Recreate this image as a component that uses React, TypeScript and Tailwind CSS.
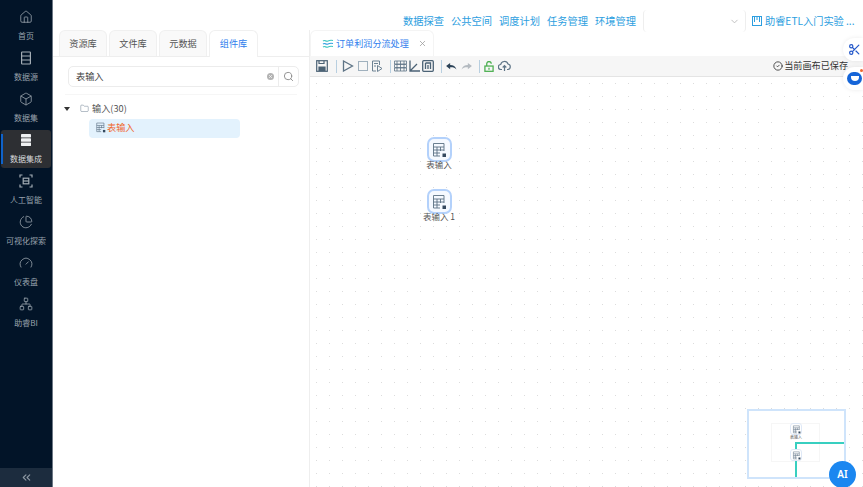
import type { ReactNode } from 'react'
import { ChevronDown, ChevronsLeft, CircleCheck, Folder, Home, Scissors, Search, X, Box, PieChart, Gauge, Network } from 'lucide-react'

function SourceIcon() {
  return (
    <svg width="14" height="14" viewBox="0 0 14 14" fill="none" stroke="#a4adb5" strokeWidth="1.200">
      <rect x="2.600" y="1" width="8.800" height="12" rx="0.500" />
      <path d="M2.600 5h8.800M2.600 9h8.800" />
    </svg>
  )
}

function StackIcon() {
  return (
    <svg width="14" height="14" viewBox="0 0 14 14" fill="#eef0f2">
      <rect x="2" y="1" width="10" height="3.400" rx="0.400" />
      <rect x="2" y="5.300" width="10" height="3.400" rx="0.400" />
      <rect x="2" y="9.600" width="10" height="3.400" rx="0.400" />
    </svg>
  )
}

function ScanIcon() {
  return (
    <svg width="14" height="14" viewBox="0 0 14 14" fill="none" stroke="#a4adb5" strokeWidth="1.200">
      <path d="M1 3.500V1h2.500M10.500 1H13v2.500M13 10.500V13h-2.500M3.500 13H1v-2.500" />
      <rect x="4.200" y="4.200" width="5.600" height="5.600" />
      <path d="M4.200 7h5.600" />
    </svg>
  )
}

const navItems = [
  { label: '首页', icon: <Home size={14} strokeWidth={1.300} color="#a4adb5" /> },
  { label: '数据源', icon: <SourceIcon /> },
  { label: '数据集', icon: <Box size={14} strokeWidth={1.300} color="#a4adb5" /> },
  { label: '数据集成', icon: <StackIcon />, active: true },
  { label: '人工智能', icon: <ScanIcon /> },
  { label: '可视化探索', icon: <PieChart size={14} strokeWidth={1.300} color="#a4adb5" /> },
  { label: '仪表盘', icon: <Gauge size={14} strokeWidth={1.300} color="#a4adb5" /> },
  { label: '助睿BI', icon: <Network size={14} strokeWidth={1.300} color="#a4adb5" /> },
]

const topLinks = ['数据探查', '公共空间', '调度计划', '任务管理', '环境管理']

function TableIcon({ size = 16, color = '#5b7083' }: { size?: number; color?: string }) {
  return (
    <svg width={size} height={size} viewBox="0 0 16 16" fill="none" stroke={color} strokeWidth="0.900">
      <path d="M9 14H2.500V1.500h10.500V9" />
      <path d="M2.500 5h10.500M2.500 8h10.500M2.500 11h6.500M6 5v9M9.500 5v4" />
      <path d="M11.500 11.500l3.500 0-0 3.500-3.500 0z" fill="#34495e" stroke="none" />
    </svg>
  )
}

function CanvasNode({ label, top }: { label: string; top: string }) {
  return (
    <div className={`absolute left-[100px] w-[58px] flex flex-col items-center ${top}`}>
      <div className="w-[25px] h-[25px] rounded-[7px] border-2 border-[#b3d1fb] bg-[#f5f9ff] flex items-center justify-center">
        <TableIcon size={16} />
      </div>
      <span className="mt-[-3px] text-[8.500px] leading-[11px] text-[#555] whitespace-nowrap">{label}</span>
    </div>
  )
}

function ToolDivider({ className }: { className: string }) {
  return <span className={`w-px h-[13px] bg-[#b8cfe0] ${className}`} />
}

function Slot({ className = '', children }: { className?: string; children: ReactNode }) {
  return <span className={`w-[14px] h-[14px] flex items-center justify-center ${className}`}>{children}</span>
}

export default function App() {
  return (
    <div
      className="w-[863px] h-[487px] flex overflow-hidden bg-white relative"
      style={{ fontFamily: '"Noto Sans CJK SC", "Noto Sans", sans-serif' }}
    >
      <aside className="w-[53px] h-full shrink-0 flex flex-col bg-[#021428] border-r border-[#6d7885]">
        <nav className="flex-1 flex flex-col items-center pt-[7px]">
          {navItems.map(({ label, icon, active }) => (
            <div
              key={label}
              className={`relative w-[50px] h-[38px] mb-[3px] flex flex-col items-center rounded-[3px] pt-[3px] ${active ? 'bg-[#2d2f33]' : ''}`}
            >
              {active && <span className="absolute left-0 top-[4px] bottom-[4px] w-[2px] bg-[#0f62c9]" />}
              {icon}
              <span className={`mt-[6px] text-[8px] leading-[11px] whitespace-nowrap ${active ? 'text-[#d8dbde]' : 'text-[#98a2ac]'}`}>{label}</span>
            </div>
          ))}
        </nav>
        <div className="h-[19px] bg-[#1c2c3e] flex items-center justify-center">
          <ChevronsLeft size={13} color="#8e99a4" />
        </div>
      </aside>

      <div className="flex-1 flex flex-col min-w-0">
        <header className="h-[29px] mt-[6px] pt-px shrink-0 flex items-center justify-end">
          <div className="flex items-center gap-[7px] text-[#2c9ee0] text-[10.250px] leading-none">
            {topLinks.map((t) => (
              <span key={t} className="whitespace-nowrap">{t}</span>
            ))}
          </div>
          <div className="ml-[7px] w-[103px] h-[22px] border-x border-[#eee] rounded-[4px] flex items-center justify-end pr-[5px]">
            <ChevronDown size={11} color="#bbb" />
          </div>
          <div className="w-[117px] pl-[6px] flex items-center gap-[3px] text-[#2c9ee0] text-[10.200px] whitespace-nowrap overflow-hidden">
            <svg width="10" height="10" viewBox="0 0 10 10" fill="none" stroke="#2c9ee0" strokeWidth="1">
              <rect x=".5" y=".5" width="9" height="9" />
              <path d="M2.500 1v5M5 1v3M7.500 1v5" />
            </svg>
            <span>助睿ETL入门实验 ...</span>
          </div>
        </header>

        <div className="flex-1 flex min-h-0 mt-[-5px]">
          <section className="w-[257px] shrink-0 border-r border-[#eeeeee] flex flex-col">
            <div className="flex h-[27px] pl-[6px] gap-[2px] border-b border-[#eeeeee]">
              {['资源库', '文件库', '元数据'].map((t) => (
                <div key={t} className="w-[48px] rounded-t-[6px] bg-[#f9f9f9] border border-b-0 border-[#f0f0f0] flex items-center justify-center text-[9.200px] text-[#555]">{t}</div>
              ))}
              <div className="w-[49px] h-[27px] rounded-t-[6px] bg-white border border-b-0 border-[#f0f0f0] flex items-center justify-center text-[9.200px] text-[#2f80ed]">组件库</div>
            </div>
            <div className="ml-[15px] mr-[10px] mt-[9px] h-[21px] flex border border-[#ececec] rounded-[5px] items-center">
              <span className="flex-1 pl-[7px] text-[9.200px] text-[#444]">表输入</span>
              <span className="w-[7px] h-[7px] rounded-full bg-[#b3b3b3] flex items-center justify-center mr-[4px]">
                <X size={5} color="#fff" strokeWidth={3} />
              </span>
              <span className="w-[20px] h-full border-l border-[#ececec] flex items-center justify-center">
                <Search size={11} color="#8a8a8a" />
              </span>
            </div>
            <div className="mt-[7px] mx-[12px] border-t border-[#f6f6f6] pt-[7px]">
              <div className="flex items-center h-[14px] text-[9.200px] text-[#555]">
                <span className="ml-[-1px] w-0 h-0 border-x-[3px] border-x-transparent border-t-[4px] border-t-[#333]" />
                <Folder size={9} color="#5b7083" strokeWidth={1.200} className="ml-[10px] mb-[2px]" />
                <span className="ml-[3px]">输入(30)</span>
              </div>
              <div className="mt-[3px] ml-[24px] w-[151px] h-[19px] rounded-[4px] bg-[#e3f2fd] flex items-center pl-[6px] gap-px">
                <span className="mb-[3px] flex"><TableIcon size={11} /></span>
                <span className="text-[9.200px] leading-[13px] mb-[3px] text-[#f0682e]">表输入</span>
              </div>
            </div>
          </section>

          <main className="flex-1 min-w-0 flex flex-col">
            <div className="h-[26px] shrink-0 flex">
              <div className="w-[124px] h-[26px] rounded-t-[6px] bg-white border-x border-t border-[#f4f4f4] flex items-center pl-[11px] gap-[2px]">
                <svg width="12" height="10" viewBox="0 0 12 10" fill="none" strokeWidth="1.100">
                  <path d="M1 2c2-1.500 3 1 5 0s3-1 5-.5" stroke="#3ec6c0" />
                  <path d="M1 5c2-1.500 3 1 5 0s3-1 5-.5" stroke="#2f9fe0" />
                  <path d="M1 8c2-1.500 3 1 5 0s3-1 5-.5" stroke="#3ec6c0" />
                </svg>
                <span className="text-[9.100px] text-[#2f80ed] whitespace-nowrap">订单利润分流处理</span>
                <X size={9} color="#999" className="ml-[7px]" />
              </div>
            </div>
            <div className="h-[21px] shrink-0 bg-[#f6f6f6] border-b border-[#e4e4e4] flex items-center pl-[5px] pr-[15px]">
              <Slot>
                <svg width="12" height="12" viewBox="0 0 12 12" fill="none" stroke="#4b6275" strokeWidth="1.200">
                  <rect x=".7" y=".7" width="10.600" height="10.600" />
                  <path d="M3 11V7h6v4" fill="#4b6275" />
                  <path d="M3 1v2.500h5V1" />
                </svg>
              </Slot>
              <ToolDivider className="ml-[7px]" />
              <Slot className="ml-[4px]">
                <svg width="12" height="12" viewBox="0 0 12 12" fill="none" stroke="#5e7486" strokeWidth="1.300"><path d="M1.500 1l9 5-9 5z" /></svg>
              </Slot>
              <Slot className="ml-px">
                <span className="w-[10px] h-[10px] border border-[#9fb0bd]" />
              </Slot>
              <Slot>
                <svg width="12" height="12" viewBox="0 0 12 12" fill="none" stroke="#6d8293">
                  <path d="M8.500 5V1H1.500v10H5M3 3.500h4M3 6h2" />
                  <path d="M6.500 5.500l4.500 3-4.500 3z" />
                </svg>
              </Slot>
              <ToolDivider className="ml-[6px]" />
              <Slot className="ml-[2px]">
                <svg width="13" height="12" viewBox="0 0 13 12" fill="none" stroke="#5e7486"><path d="M.5 1h12v3H.5zM.5 4.500h12v3H.5zM.5 8h12v3H.5zM3 1v10M6.500 1v10M10 1v10" strokeWidth=".8" /></svg>
              </Slot>
              <Slot>
                <svg width="11" height="12" viewBox="0 0 11 12" fill="none" stroke="#4b6275" strokeWidth="1.300"><path d="M1 .5V11h10M1.500 10.500L8 4" /></svg>
              </Slot>
              <Slot>
                <svg width="12" height="12" viewBox="0 0 12 12" fill="none" stroke="#4b6275" strokeWidth="1.300"><rect x=".7" y=".7" width="10.600" height="10.600" rx="1" /><path d="M3.500 3h5v6M3.500 3v6M6 5v4" /></svg>
              </Slot>
              <ToolDivider className="ml-[6px]" />
              <Slot className="ml-[2px]">
                <svg width="11" height="9" viewBox="0 0 12 10" fill="#2b4257"><path d="M0 4.500L4.500 1v2.300c3.500 0 6 1.500 7 5-1.500-2-3.500-2.600-7-2.500V8z" /></svg>
              </Slot>
              <Slot className="ml-px">
                <svg width="11" height="9" viewBox="0 0 12 10" fill="#b4bac0"><path d="M12 4.500L7.500 1v2.300c-3.500 0-6 1.500-7 5 1.500-2 3.500-2.600 7-2.500V8z" /></svg>
              </Slot>
              <ToolDivider className="ml-[6px]" />
              <Slot className="ml-[2px]">
                <svg width="10" height="11" viewBox="0 0 11 12" fill="none" stroke="#4caf50" strokeWidth="1.400">
                  <rect x="1" y="5.500" width="9" height="5.800" />
                  <path d="M3 5.500V3a2.500 2.500 0 0 1 5 0" />
                  <path d="M5.500 7.500v2" />
                </svg>
              </Slot>
              <Slot className="ml-px">
                <svg width="13" height="12" viewBox="0 0 13 12" fill="none" stroke="#5e7486" strokeWidth="1.200">
                  <path d="M4 9.500H3a2.500 2.500 0 0 1-.3-5A3.800 3.800 0 0 1 10 4a2.800 2.800 0 0 1 0 5.500H9" />
                  <path d="M6.500 11V6M4.700 7.500l1.800-1.800 1.800 1.800" />
                </svg>
              </Slot>
              <div className="ml-auto flex items-center gap-px text-[9.150px] text-[#333] whitespace-nowrap">
                <CircleCheck size={10} />
                <span>当前画布已保存</span>
              </div>
            </div>
            <div className="flex-1 relative bg-white bg-[radial-gradient(#dcdcdc_0.6px,transparent_0.8px)] bg-[size:13px_13px] overflow-hidden">
              <CanvasNode label="表输入" top="top-[60px]" />
              <CanvasNode label="表输入 1" top="top-[112px]" />
              <div className="absolute left-[437px] top-[332px] w-[99px] h-[70px] border-2 border-[#cfe4fb] bg-white overflow-hidden">
                <div className="absolute left-[22px] top-[12px] w-[49px] h-[39px] border border-[#f6f6f6]" />
                <div className="absolute left-[41px] top-[12px] w-[12px] h-[12px] rounded-[3px] border border-[#dfe9f7] flex items-center justify-center"><TableIcon size={9} /></div>
                <span className="absolute left-[41px] top-[24px] text-[4px] leading-[5px] text-[#555] whitespace-nowrap">表输入</span>
                <div className="absolute left-[46px] top-[31px] right-0 h-[40px] border-l-2 border-t-2 border-[#38cfc0]" />
                <div className="absolute left-[41px] top-[38px] w-[12px] h-[12px] rounded-[3px] border border-[#dfe9f7] bg-white flex items-center justify-center"><TableIcon size={9} /></div>
              </div>
            </div>
          </main>
        </div>
      </div>

      <div className="absolute right-0 top-[38px] w-[20px] h-[23px] rounded-l-full bg-white shadow-[0_0_4px_rgba(0,0,0,0.08)] flex items-center justify-end pr-[2px]">
        <Scissors size={13} strokeWidth={2.200} color="#2257c9" />
      </div>
      <div className="absolute right-0 top-[67px] w-[20px] h-[23px] rounded-l-full bg-white shadow-[0_0_4px_rgba(0,0,0,0.08)] flex items-center justify-end">
        <span className="relative w-[15px] h-[13px] mr-px rounded-full bg-[#1565d8] flex items-center justify-center">
          <span className="w-[8px] h-[5px] rounded-b-full bg-white" />
          <span className="absolute right-[-1px] top-[-3px] w-[3px] h-[3px] rounded-full bg-[#f0682e]" />
        </span>
      </div>
      <div className="absolute left-[829px] top-[461px] w-[27px] h-[27px] rounded-full bg-[#1b87f0] flex items-center justify-center text-white text-[10px] font-semibold" style={{ fontFamily: '"Noto Sans", sans-serif' }}>
        AI
      </div>
    </div>
  )
}
